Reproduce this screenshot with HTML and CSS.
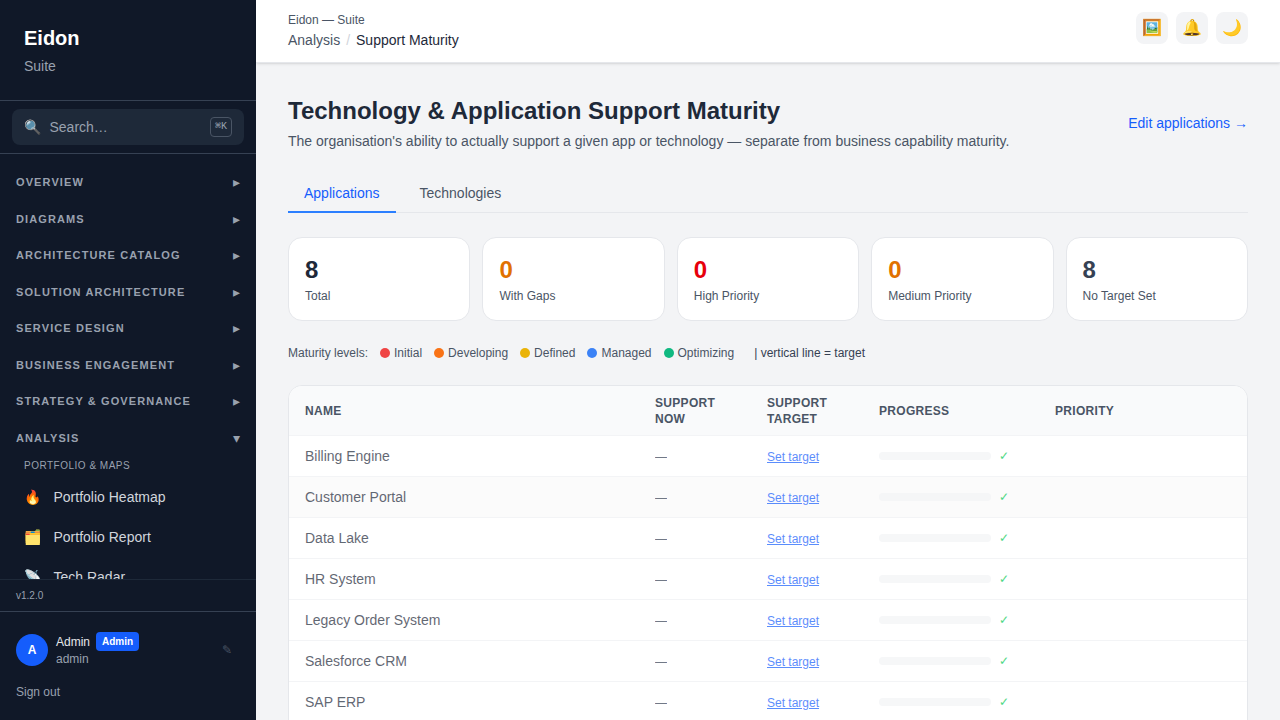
FILE: index.html
```html
<!DOCTYPE html>
<html lang="en">
<head>
<meta charset="utf-8">
<title>Eidon — Support Maturity</title>
<link rel="stylesheet" href="styles.css">
</head>
<body>
<div class="app">
  <aside class="sidebar">
    <div class="brand"><div class="brand-name">Eidon</div><div class="brand-sub">Suite</div></div>
    <div class="search-wrap"><button class="search"><span class="search-icon">🔍</span><span class="search-label">Search…</span><kbd>⌘K</kbd></button></div>
    <nav class="nav">
      <div class="group"><span>Overview</span><i>▸</i></div>
      <div class="group"><span>Diagrams</span><i>▸</i></div>
      <div class="group"><span>Architecture Catalog</span><i>▸</i></div>
      <div class="group"><span>Solution Architecture</span><i>▸</i></div>
      <div class="group"><span>Service Design</span><i>▸</i></div>
      <div class="group"><span>Business Engagement</span><i>▸</i></div>
      <div class="group"><span>Strategy &amp; Governance</span><i>▸</i></div>
      <div class="group"><span>Analysis</span><i>▾</i></div>
      <div class="subhead">Portfolio &amp; Maps</div>
      <a class="item"><span class="item-icon">🔥</span><span>Portfolio Heatmap</span></a>
      <a class="item"><span class="item-icon">🗂️</span><span>Portfolio Report</span></a>
      <a class="item"><span class="item-icon">📡</span><span>Tech Radar</span></a>
    </nav>
    <div class="version">v1.2.0</div>
    <div class="account">
      <div class="user">
        <div class="avatar">A</div>
        <div class="who"><div class="who-top"><span class="who-name">Admin</span><span class="role">Admin</span></div><div class="who-login">admin</div></div>
        <span class="edit">✎</span>
      </div>
      <div class="signout">Sign out</div>
    </div>
  </aside>
  <div class="content">
    <header class="topbar">
      <div>
        <div class="suite">Eidon — Suite</div>
        <div class="crumbs"><span>Analysis</span><span class="slash">/</span><span class="current">Support Maturity</span></div>
      </div>
      <div class="actions"><button>🖼️</button><button>🔔</button><button>🌙</button></div>
    </header>
    <main class="main">
      <div class="page-head">
        <div><h1>Technology &amp; Application Support Maturity</h1>
        <p>The organisation's ability to actually support a given app or technology — separate from business capability maturity.</p></div>
        <a class="edit-link">Edit applications →</a>
      </div>
      <div class="tabs"><div class="tab active">Applications</div><div class="tab">Technologies</div></div>
      <div class="stats">
        <div class="stat"><b>8</b><span>Total</span></div>
        <div class="stat"><b class="amber">0</b><span>With Gaps</span></div>
        <div class="stat"><b class="red">0</b><span>High Priority</span></div>
        <div class="stat"><b class="amber">0</b><span>Medium Priority</span></div>
        <div class="stat"><b class="slate">8</b><span>No Target Set</span></div>
      </div>
      <div class="legend">
        <span>Maturity levels:</span>
        <span class="level"><i class="initial"></i>Initial</span>
        <span class="level"><i class="developing"></i>Developing</span>
        <span class="level"><i class="defined"></i>Defined</span>
        <span class="level"><i class="managed"></i>Managed</span>
        <span class="level"><i class="optimizing"></i>Optimizing</span>
        <span class="target-note">| vertical line = target</span>
      </div>
      <div class="table">
        <div class="row head"><div>Name</div><div>Support Now</div><div>Support Target</div><div>Progress</div><div>Priority</div></div>
        <div class="row"><div class="name">Billing Engine</div><div class="now">—</div><div class="set"><a>Set target</a></div><div class="progress"><i></i><span>✓</span></div></div>
        <div class="row alt"><div class="name">Customer Portal</div><div class="now">—</div><div class="set"><a>Set target</a></div><div class="progress"><i></i><span>✓</span></div></div>
        <div class="row"><div class="name">Data Lake</div><div class="now">—</div><div class="set"><a>Set target</a></div><div class="progress"><i></i><span>✓</span></div></div>
        <div class="row"><div class="name">HR System</div><div class="now">—</div><div class="set"><a>Set target</a></div><div class="progress"><i></i><span>✓</span></div></div>
        <div class="row"><div class="name">Legacy Order System</div><div class="now">—</div><div class="set"><a>Set target</a></div><div class="progress"><i></i><span>✓</span></div></div>
        <div class="row"><div class="name">Salesforce CRM</div><div class="now">—</div><div class="set"><a>Set target</a></div><div class="progress"><i></i><span>✓</span></div></div>
        <div class="row last"><div class="name">SAP ERP</div><div class="now">—</div><div class="set"><a>Set target</a></div><div class="progress"><i></i><span>✓</span></div></div>
      </div>
    </main>
  </div>
</div>
</body>
</html>
```
FILE: styles.css
```css
* { box-sizing: border-box; }
body { margin: 0; font: 14px/20px "Liberation Sans", Arial, sans-serif; color: #1e2939; background: #f3f4f6; overflow: hidden; }
button { font: inherit; border: 0; padding: 0; }
h1, p { margin: 0; }
i { font-style: normal; }
.app { display: flex; height: 100vh; overflow: hidden; }

.sidebar { width: 256px; flex: none; background: #101828; color: #99a1af; display: flex; flex-direction: column; }
.brand { padding: 24px; border-bottom: 1px solid #364153; }
.brand-name { color: #fff; font-size: 20px; line-height: 28px; font-weight: 700; }
.brand-sub { margin-top: 4px; }
.search-wrap { padding: 8px 12px; border-bottom: 1px solid #364153; }
.search { width: 100%; height: 36px; display: flex; align-items: center; gap: 8px; padding: 0 12px; border-radius: 8px; background: #1e2939; color: #99a1af; text-align: left; }
.search-icon { width: 17.5px; }
.search-label { flex: 1; }
kbd { height: 20px; padding: 0 4px; border: 1px solid #4a5565; border-radius: 4px; font: 10px/17px "Liberation Mono", monospace; }
.nav { flex: 1; min-height: 0; overflow: hidden; padding: 12px 8px 0; }
.group { display: flex; justify-content: space-between; align-items: center; padding: 8px; margin-bottom: 4px; font-size: 11px; line-height: 16.5px; font-weight: 700; letter-spacing: 1.1px; text-transform: uppercase; }
.group i { letter-spacing: 0; font-size: 14px; font-weight: 400; }
.subhead { padding: 0 16px; margin: 0 0 5px; font-size: 10px; line-height: 16px; letter-spacing: .5px; text-transform: uppercase; color: #99a1af; }
.item { display: flex; align-items: center; gap: 12px; height: 36px; padding: 0 16px; margin-bottom: 4px; color: #d1d5dc; }
.item-icon { width: 17.5px; }
.version { height: 32px; padding: 8px 16px; border-top: 1px solid #1e2939; font-size: 10px; line-height: 15px; }
.account { height: 109px; padding: 20px 16px 0; border-top: 1px solid #364153; font-size: 12px; line-height: 16px; }
.user { display: flex; align-items: center; gap: 8px; height: 36px; }
.avatar { width: 32px; height: 32px; border-radius: 50%; background: #155dfc; color: #fff; font-weight: 700; line-height: 32px; text-align: center; }
.who { flex: 1; padding-bottom: 2px; }
.who-top { display: flex; align-items: center; gap: 6px; height: 19px; }
.who-name { color: #e5e7eb; padding-top: 1px; }
.role { padding: 2px 6px; border-radius: 4px; background: #155dfc; color: #fff; font-size: 10px; line-height: 15px; font-weight: 700; }
.edit { color: #4a5565; margin-right: 8px; }
.signout { margin-top: 16px; }

.content { flex: 1; min-width: 0; }
.topbar { height: 63px; padding: 12px 32px; display: flex; justify-content: space-between; align-items: flex-start; background: #fff; border-bottom: 1px solid #e5e7eb; box-shadow: 0 1px 3px rgba(0,0,0,.1), 0 1px 2px -1px rgba(0,0,0,.1); color: #4a5565; }
.suite { font-size: 12px; line-height: 16px; }
.crumbs { display: flex; gap: 6px; margin-top: 2px; }
.slash { color: #d1d5dc; }
.current { color: #1e2939; }
.actions { display: flex; gap: 8px; }
.actions button { width: 32px; height: 32px; border-radius: 8px; background: #f3f4f6; font-size: 16px; line-height: 24px; text-align: center; }
.main { padding: 32px 32px 0; }
.page-head { display: flex; justify-content: space-between; align-items: center; height: 56px; }
h1 { font-size: 24px; line-height: 32px; }
.page-head p { margin-top: 4px; color: #4a5565; }
.edit-link { color: #155dfc; }
.tabs { display: flex; gap: 8px; margin-top: 24px; height: 38px; border-bottom: 1px solid #e5e7eb; }
.tab { height: 38px; padding: 8px 16px; border-bottom: 2px solid transparent; color: #4a5565; }
.tab.active { color: #155dfc; border-color: #2b7fff; }
.stats { display: grid; grid-template-columns: repeat(5, 1fr); gap: 12px; margin-top: 24px; }
.stat { display: flex; flex-direction: column; height: 84px; padding: 16px; background: #fff; border: 1px solid #e5e7eb; border-radius: 14px; }
.stat b { font-size: 24px; line-height: 32px; }
.stat span { margin-top: 2px; font-size: 12px; line-height: 16px; color: #4a5565; }
.amber { color: #e17100; }
.red { color: #e7000b; }
.slate { color: #364153; }
.legend { display: flex; align-items: center; gap: 12px; margin-top: 24px; font-size: 12px; line-height: 16px; color: #4a5565; }
.level { display: flex; align-items: center; gap: 4px; }
.level i { width: 10px; height: 10px; border-radius: 50%; }
.initial { background: #ef4444; }
.developing { background: #f97316; }
.defined { background: #eab308; }
.managed { background: #3b82f6; }
.optimizing { background: #10b981; }
.target-note { margin-left: 8px; color: #364153; }
.table { margin-top: 24px; background: #fff; border: 1px solid #e5e7eb; border-radius: 14px; overflow: hidden; }
.row { display: grid; grid-template-columns: 1fr 112px 112px 176px 208px; align-items: center; height: 41px; border-bottom: 1px solid #f3f4f6; }
.row > div { padding: 0 16px; }
.row.alt { background: #fbfbfb; }
.row.last { height: 60px; padding-bottom: 19px; }
.head { height: 50px; background: #f9fafb; font-size: 12px; line-height: 16px; font-weight: 700; letter-spacing: .3px; text-transform: uppercase; color: #4a5565; }
.name, .now, .set, .progress { opacity: .7; }
.name { color: #1e2939; }
.row > .now, .row > .set { padding-top: 2px; font-size: 12px; }
.now { color: #364153; }
.set { color: #155dfc; text-decoration: underline; }
.progress { display: flex; align-items: center; gap: 8px; font-size: 12px; line-height: 16px; color: #00c950; }
.progress i { width: 112px; height: 8px; border-radius: 4px; background: #f3f4f6; flex: none; }
```
